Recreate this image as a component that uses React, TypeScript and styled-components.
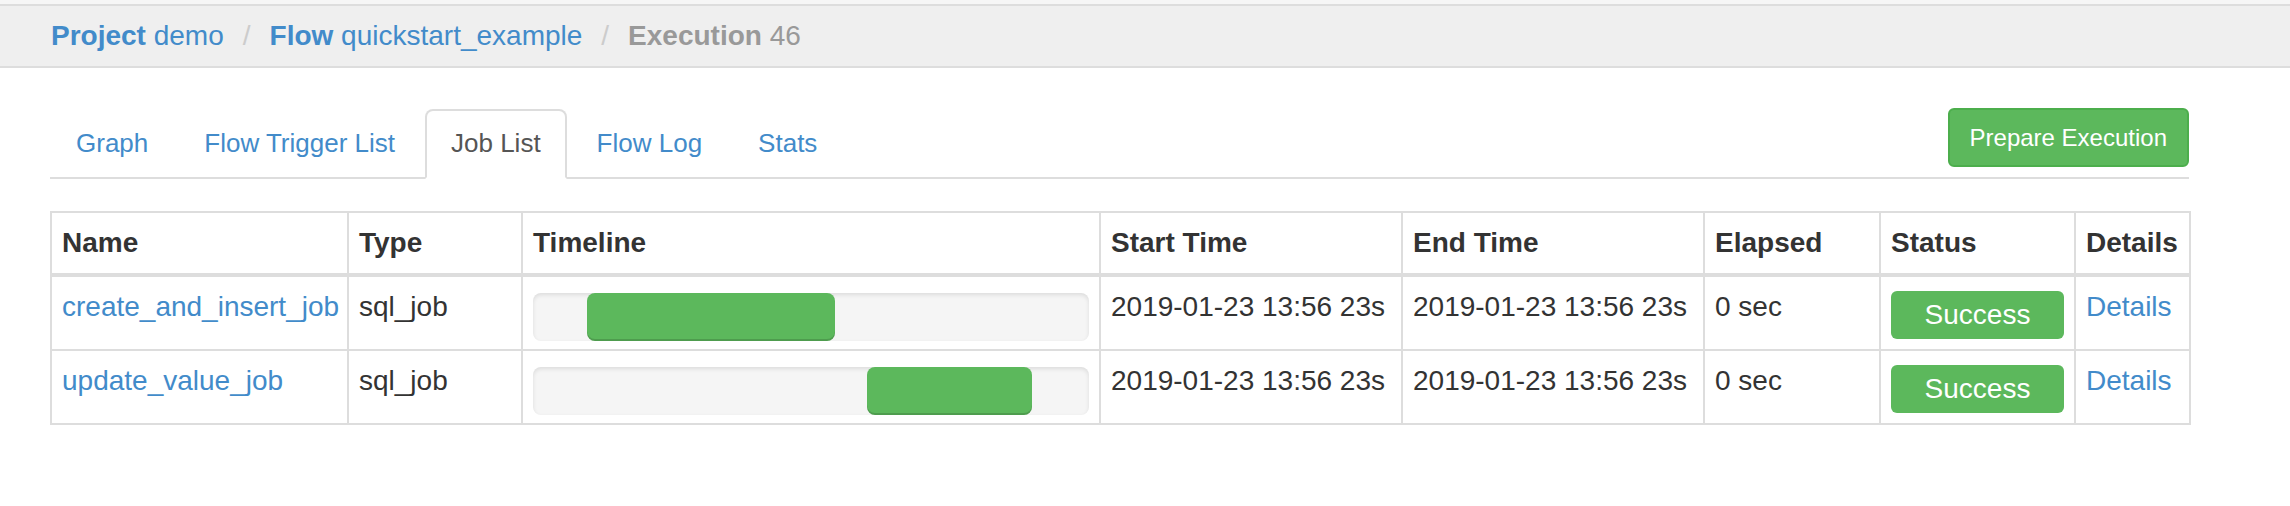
import React from "react";
import styled, { createGlobalStyle } from "styled-components";

const GlobalStyle = createGlobalStyle`
  html, body { margin: 0; padding: 0; background: #ffffff; }
  body {
    font-family: "Liberation Sans", Arial, Helvetica, sans-serif;
    color: #333333;
    font-size: 28px;
    line-height: 40px;
  }
  * { box-sizing: border-box; }
`;

const Page = styled.div`
  width: 2290px;
  min-height: 506px;
`;

const TopStrip = styled.div`
  height: 4px;
  background: #f6f6f6;
`;

const HeaderBar = styled.div`
  height: 64px;
  background: #efefef;
  border-top: 2px solid #dddddd;
  border-bottom: 2px solid #dddddd;
  padding: 10px 0 10px 51px;
`;

const Crumbs = styled.ol`
  display: flex;
  margin: 0;
  padding: 0;
  list-style: none;
  font-size: 28px;
  line-height: 40px;
`;

const Crumb = styled.li<{ $muted?: boolean }>`
  color: ${(p) => (p.$muted ? "#999999" : "#428bca")};
  white-space: pre;
`;

const CrumbLabel = styled.b`
  font-weight: 700;
`;

const Sep = styled.li`
  color: #cccccc;
  padding: 0 19px;
`;

const Main = styled.div`
  margin: 40px 0 0 50px;
  width: 2139px;
`;

const NavRow = styled.div`
  display: flex;
  justify-content: space-between;
  align-items: flex-start;
  border-bottom: 2px solid #dddddd;
  height: 71px;
`;

const Tabs = styled.ul`
  display: flex;
  margin: 1px 0 0 0;
  padding: 0;
  list-style: none;
`;

const TabItem = styled.li`
  margin: 0 4px -2px 0;
`;

const TabLink = styled.a<{ $active?: boolean }>`
  display: block;
  font-size: 26px;
  line-height: 36px;
  padding: 14px 24px 16px;
  border: 2px solid transparent;
  border-radius: 8px 8px 0 0;
  text-decoration: none;
  cursor: pointer;
  color: ${(p) => (p.$active ? "#555555" : "#428bca")};
  background: ${(p) => (p.$active ? "#ffffff" : "transparent")};
  border-color: ${(p) =>
    p.$active ? "#dddddd #dddddd transparent #dddddd" : "transparent"};
`;

const PrimaryButton = styled.button`
  font-family: inherit;
  font-size: 24px;
  line-height: 35px;
  height: 59px;
  padding: 10px 20px;
  border: 2px solid #4cae4c;
  border-radius: 6px;
  background: #5cb85c;
  color: #ffffff;
  cursor: pointer;
`;

const Table = styled.table`
  margin-top: 32px;
  width: 100%;
  table-layout: fixed;
  border-collapse: collapse;
  border: 2px solid #dddddd;
`;

const Col = styled.col<{ $w: number }>`
  width: ${(p) => p.$w}px;
`;

const Th = styled.th`
  padding: 10px;
  text-align: left;
  font-weight: 700;
  line-height: 40px;
  vertical-align: bottom;
  white-space: nowrap;
  border: 2px solid #dddddd;
  border-bottom-width: 4px;
  color: #333333;
`;

const Td = styled.td`
  padding: 10px;
  line-height: 40px;
  vertical-align: top;
  white-space: nowrap;
  border: 2px solid #dddddd;
`;

const TimelineCell = styled(Td)`
  padding: 16px 10px 7px;
`;

const Link = styled.a`
  color: #428bca;
  text-decoration: none;
  cursor: pointer;
`;

const Track = styled.div`
  position: relative;
  height: 48px;
  background: #f5f5f5;
  border-radius: 8px;
  box-shadow: inset 0 2px 4px rgba(0, 0, 0, 0.1);
`;

const Fill = styled.div`
  position: absolute;
  top: 0;
  bottom: 0;
  background: #5cb85c;
  border-radius: 8px;
  box-shadow: inset 0 -2px 0 rgba(0, 0, 0, 0.15);
`;

const StatusLabel = styled.span`
  display: block;
  margin-top: 4px;
  height: 48px;
  line-height: 48px;
  text-align: center;
  font-size: 28px;
  color: #ffffff;
  background: #5cb85c;
  border-radius: 6px;
`;

const columns: { title: string; w: number }[] = [
  { title: "Name", w: 297 },
  { title: "Type", w: 174 },
  { title: "Timeline", w: 578 },
  { title: "Start Time", w: 302 },
  { title: "End Time", w: 302 },
  { title: "Elapsed", w: 176 },
  { title: "Status", w: 195 },
  { title: "Details", w: 115 },
];

const jobs = [
  {
    name: "create_and_insert_job",
    type: "sql_job",
    start: "2019-01-23 13:56 23s",
    end: "2019-01-23 13:56 23s",
    elapsed: "0 sec",
    status: "Success",
    left: 9.7,
    width: 44.6,
  },
  {
    name: "update_value_job",
    type: "sql_job",
    start: "2019-01-23 13:56 23s",
    end: "2019-01-23 13:56 23s",
    elapsed: "0 sec",
    status: "Success",
    left: 60.1,
    width: 29.7,
  },
];

const tabs = ["Graph", "Flow Trigger List", "Job List", "Flow Log", "Stats"];

export default function App() {
  return (
    <Page>
      <GlobalStyle />
      <TopStrip />
      <HeaderBar>
        <Crumbs>
          <Crumb>
            <CrumbLabel>Project</CrumbLabel> demo
          </Crumb>
          <Sep>/</Sep>
          <Crumb>
            <CrumbLabel>Flow</CrumbLabel> quickstart_example
          </Crumb>
          <Sep>/</Sep>
          <Crumb $muted>
            <CrumbLabel>Execution</CrumbLabel> 46
          </Crumb>
        </Crumbs>
      </HeaderBar>
      <Main>
        <NavRow>
          <Tabs>
            {tabs.map((t) => (
              <TabItem key={t}>
                <TabLink $active={t === "Job List"}>{t}</TabLink>
              </TabItem>
            ))}
          </Tabs>
          <PrimaryButton>Prepare Execution</PrimaryButton>
        </NavRow>
        <Table>
          <colgroup>
            {columns.map((c) => (
              <Col key={c.title} $w={c.w} />
            ))}
          </colgroup>
          <thead>
            <tr>
              {columns.map((c) => (
                <Th key={c.title}>{c.title}</Th>
              ))}
            </tr>
          </thead>
          <tbody>
            {jobs.map((j) => (
              <tr key={j.name}>
                <Td>
                  <Link>{j.name}</Link>
                </Td>
                <Td>{j.type}</Td>
                <TimelineCell>
                  <Track>
                    <Fill style={{ left: `${j.left}%`, width: `${j.width}%` }} />
                  </Track>
                </TimelineCell>
                <Td>{j.start}</Td>
                <Td>{j.end}</Td>
                <Td>{j.elapsed}</Td>
                <Td>
                  <StatusLabel>{j.status}</StatusLabel>
                </Td>
                <Td>
                  <Link>Details</Link>
                </Td>
              </tr>
            ))}
          </tbody>
        </Table>
      </Main>
    </Page>
  );
}
